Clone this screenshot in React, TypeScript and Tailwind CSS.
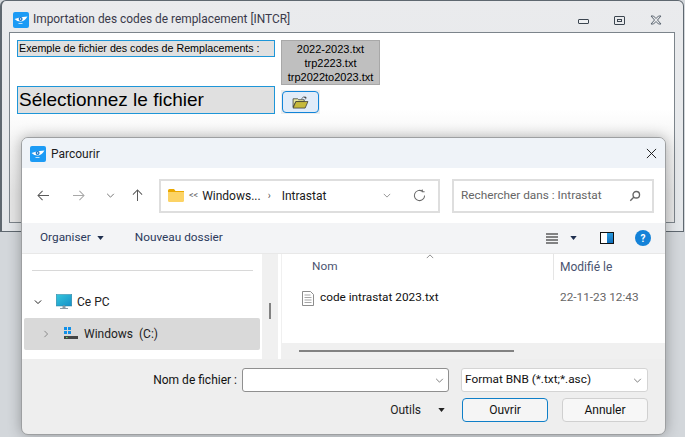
import React from "react";

const Logo = ({ className }: { className?: string }) => (
  <svg viewBox="0 0 16 16" className={className}>
    <rect width="16" height="16" rx="2" fill="#1c9bf5" />
    <path d="M1.500 7 Q7 4.500 14.500 4.500 Q11.500 9.500 7.500 9.500 Q4 9.500 1.500 7Z" fill="#fff" />
    <circle cx="7.600" cy="7" r="2" fill="#1a74c4" />
    <circle cx="7.600" cy="7" r="0.700" fill="#fff" />
    <path d="M5.500 11.500h4" stroke="#bfe2fb" strokeWidth="1" />
  </svg>
);

const Chevron = ({ d, color = "#6b6b6b", className, w = 1.1 }: { d: string; color?: string; className?: string; w?: number }) => (
  <svg viewBox="0 0 16 16" className={className} fill="none" stroke={color} strokeWidth={w}>
    <path d={d} />
  </svg>
);

const Tri = ({ className, color = "#1f2f4f" }: { className?: string; color?: string }) => (
  <svg viewBox="0 0 8 5" className={className}>
    <path d="M0 0h8L4 5z" fill={color} />
  </svg>
);

export default function App() {
  return (
    <div
      className="relative w-[685px] h-[437px] overflow-hidden bg-[#d3d7db] text-black"
      style={{ fontFamily: 'Roboto,"Noto Sans",sans-serif' }}
    >
      {/* Parent window */}
      <div className="w-[684px] h-[232px] flex flex-col bg-gradient-to-b from-[#eaebed] to-[#e4e7ea] border-t border-l-2 border-r border-b border-[#5f6870] rounded-t-[6px]">
        <div className="h-[31px] flex items-center shrink-0 pl-[11px] pr-[21px] pt-[7px]">
          <Logo className="w-[16px] h-[16px]" />
          <span className="ml-[4px] text-[11.9px] text-[#3a3a4a]">
            Importation des codes de remplacement [INTCR]
          </span>
          <div className="ml-auto flex items-center gap-[25px]">
            <div className="w-[11px] h-[5px] mt-[2px] border border-[#3c4650] bg-[#eef0f2] rounded-[1px]" />
            <div className="w-[11px] h-[9px] border border-[#3c4650] flex items-center justify-center rounded-[1px]">
              <div className="w-[5px] h-[3px] border border-[#3c4650]" />
            </div>
            <svg viewBox="0 0 12 10" className="w-[12px] h-[10px]" fill="none" stroke="#5b6570" strokeWidth="1">
              <path d="M1 1h2.500L6 3.500 8.500 1H11L7.500 5 11 9H8.500L6 6.500 3.500 9H1L4.500 5z" />
            </svg>
          </div>
        </div>
        <div className="ml-[7px] mr-[8px] h-[191px] border border-[#7c848b] bg-gradient-to-b from-white from-[40%] to-[#e6e6e6] to-[85%]">
          <div className="pl-[7px] pt-[7px] flex items-start" style={{ fontFamily: '"Liberation Sans",sans-serif' }}>
            <div className="w-[258px] h-[17px] border border-[#1e96d8] bg-[#e0e0e0] text-[10.7px] leading-[15px] pl-[1px] whitespace-nowrap">
              Exemple de fichier des codes de Remplacements :
            </div>
            <div className="ml-[6px] w-[99px] h-[45px] bg-[#bfbfbf] border border-[#a8a8a8] text-[11px] leading-[14px] text-center pt-[1px]">
              <div>2022-2023.txt</div>
              <div>trp2223.txt</div>
              <div>trp2022to2023.txt</div>
            </div>
          </div>
          <div className="pl-[7px] mt-[1px] flex items-start" style={{ fontFamily: '"Liberation Sans",sans-serif' }}>
            <div className="w-[258px] h-[28px] border border-[#1e96d8] bg-[#e0e0e0] text-[19px] leading-[26px] pl-[1px]">
              Sélectionnez le fichier
            </div>
            <div className="ml-[6px] mt-[4px] w-[39px] h-[24px] bg-[#eeeeee] flex items-center justify-center">
              <div className="w-[37px] h-[22px] border border-[#1184d8] rounded-[4px] bg-[#e1ecf9] flex items-center justify-center">
                <svg viewBox="0 0 18 14" className="w-[17px] h-[13px]">
                  <path d="M1 3h5l1 1h6v2H4L1 12z" fill="#e8e8a0" stroke="#333" strokeWidth="0.8" />
                  <path d="M4 6h13l-3 7H1z" fill="#c6b93c" stroke="#333" strokeWidth="0.8" />
                  <path d="M10 3 Q12 0 15 1.500 M15 1.500 l-.5 2 M15 1.500 l-2 -.2" fill="none" stroke="#333" strokeWidth="0.8" />
                </svg>
              </div>
            </div>
          </div>
        </div>
      </div>

      {/* File dialog */}
      <div className="absolute left-[21px] top-[137px] w-[645px] h-[298px] flex flex-col overflow-hidden rounded-[7px] border border-[#9d9fa1] bg-[#eeeeee] text-[11.8px] shadow-[0_0_14px_rgba(0,0,0,0.3)]">
        <div className="h-[30px] shrink-0 bg-[#eff3f8] flex items-center pl-[8px] pr-[8px] pt-[1px]">
          <Logo className="w-[16px] h-[16px]" />
          <span className="ml-[5px] text-[12px] text-[#1c1c1c]">Parcourir</span>
          <svg viewBox="0 0 12 12" className="ml-auto w-[11px] h-[11px]" fill="none" stroke="#111" strokeWidth="1">
            <path d="M1 1l10 10M11 1L1 11" />
          </svg>
        </div>

        <div className="h-[55px] shrink-0 bg-white flex items-center pl-[15px] pr-[11px]">
          <div className="flex items-center gap-[19px] w-[122px] text-[#555]">
            <svg viewBox="0 0 14 12" className="w-[13px] h-[11px]" fill="none" stroke="#5a5a5a" strokeWidth="1.1"><path d="M13 6H1M6 1L1 6l5 5" /></svg>
            <svg viewBox="0 0 14 12" className="ml-[3px] w-[13px] h-[11px]" fill="none" stroke="#a8a8a8" strokeWidth="1.1"><path d="M1 6h12M8 1l5 5-5 5" /></svg>
            <svg viewBox="0 0 10 6" className="ml-[2px] w-[9px] h-[5px]" fill="none" stroke="#6a6a6a" strokeWidth="1.100"><path d="M1 1l4 4 4-4" /></svg>
            <svg viewBox="0 0 12 14" className="ml-[-2px] w-[11px] h-[13px]" fill="none" stroke="#5a5a5a" strokeWidth="1.1"><path d="M6 13V1M1 6l5-5 5 5" /></svg>
          </div>
          <div className="w-[281px] h-[34px] border-2 border-[#dedede] flex items-center pl-[7px] pr-[12px] text-[#1a1a1a]">
            <svg viewBox="0 0 16 13" className="w-[16px] h-[13px]">
              <path d="M0 1.500Q0 0 1.500 0H6l1.500 2H16v2H0z" fill="#eba800" />
              <path d="M0 3h16v8.500Q16 13 14.500 13h-13Q0 13 0 11.500z" fill="#fcd365" />
            </svg>
            <span className="ml-[5px] text-[9px] text-[#666]">&lt;&lt;</span>
            <span className="ml-[4px] text-[12px]">Windows...</span>
            <span className="ml-[7px] text-[10px] text-[#555]">›</span>
            <span className="ml-[11px] text-[12px]">Intrastat</span>
            <svg viewBox="0 0 10 6" className="ml-auto w-[8px] h-[5px]" fill="none" stroke="#808080" strokeWidth="1"><path d="M1 1l4 4 4-4" /></svg>
            <svg viewBox="0 0 14 14" className="ml-[22px] w-[13px] h-[13px]" fill="none" stroke="#6a6a6a" strokeWidth="1.100"><path d="M12.500 7A5.500 5.500 0 1 1 10 2.400M10 .5v2.500h2.500" /></svg>
          </div>
          <div className="ml-[12px] w-[202px] h-[34px] border-2 border-[#dedede] flex items-center pl-[7px] pr-[11px] text-[#666]">
            <span>Rechercher dans : Intrastat</span>
            <svg viewBox="0 0 14 14" className="ml-auto w-[12px] h-[12px]" fill="none" stroke="#666" strokeWidth="1.600"><circle cx="8.500" cy="5.500" r="3.800" /><path d="M5.800 8.200L1.500 12.500" /></svg>
          </div>
        </div>

        <div className="h-[31px] shrink-0 bg-[#f3f4f6] border-b border-[#e8e8e8] flex items-center pl-[18px] pr-[14px] text-[#2c3a5c]">
          <span>Organiser</span>
          <Tri className="ml-[6px] w-[7px] h-[4px]" />
          <span className="ml-[31px]">Nouveau dossier</span>
          <svg viewBox="0 0 12 10" className="ml-auto w-[12px] h-[11px]" stroke="#111" strokeWidth="1"><path d="M0 .5h12M0 3.500h12M0 6.500h12M0 9.500h12" /></svg>
          <Tri className="ml-[12px] w-[7px] h-[4px]" />
          <div className="ml-[23px] w-[14px] h-[12px] border border-[#111] flex justify-end bg-white">
            <div className="w-[6px] h-full bg-gradient-to-b from-[#2a9bdf] to-[#0f6fbd]" />
          </div>
          <div className="ml-[21px] w-[16px] h-[16px] rounded-full bg-[#1482d8] text-white font-bold text-[10px] flex items-center justify-center">?</div>
        </div>

        <div className="h-[105px] shrink-0 bg-white flex">
          <div className="w-[240px] relative">
            <div className="ml-[10px] mr-[9px] mt-[16px] h-px bg-[#d8d8d8]" />
            <div className="flex items-center h-[32px] mt-[15px]">
              <Chevron d="M3 5.500l5 5 5-5" color="#222" w={1.6} className="ml-[11px] w-[10px] h-[10px]" />
              <svg viewBox="0 0 16 16" className="ml-[13px] w-[16px] h-[16px]">
                <defs>
                  <linearGradient id="scr" x1="0" y1="0" x2="1" y2="1">
                    <stop offset="0" stopColor="#35c6dc" />
                    <stop offset="1" stopColor="#1590c8" />
                  </linearGradient>
                </defs>
                <rect x="0.250" y="0.500" width="15.500" height="11.500" fill="url(#scr)" stroke="#2b7f9e" strokeWidth="0.5" />
                <path d="M7 12h2v2H7zM4 14.500h8" stroke="#8a9aa5" fill="#8a9aa5" />
              </svg>
              <span className="ml-[5px] text-[12px] text-[#222]">Ce PC</span>
            </div>
            <div className="mx-[2px] h-[32px] rounded-[2px] bg-[#d9d9d9] flex items-center">
              <Chevron d="M5.500 3l5 5-5 5" color="#8a8a8a" w={1.6} className="ml-[17px] w-[10px] h-[10px]" />
              <svg viewBox="0 0 16 14" className="ml-[12px] -mt-[3px] w-[16px] h-[14px]">
                <path d="M1 1h3v3H1zM5 1h3v3H5zM1 5h3v3H1zM5 5h3v3H5z" fill="#0f8fe8" />
                <path d="M1 10h14v3H1z" fill="#444" />
                <path d="M10 7l5 3H1l8-1z" fill="#d8d8d8" />
                <rect x="3" y="11" width="1.500" height="1" fill="#5fdc5f" />
              </svg>
              <span className="ml-[5px] text-[12px] text-[#222] whitespace-pre">Windows  (C:)</span>
            </div>
          </div>
          <div className="w-[16px] bg-[#f0f0f0] flex flex-col items-center pt-[49px]">
            <div className="w-[2px] h-[16px] bg-[#828282]" />
          </div>
          <div className="w-[3px]" />
          <div className="flex-1 flex flex-col border-l border-[#f0f0f0] relative">
            <div className="flex h-[26px] text-[#4a5470]">
              <div className="w-[271px] pl-[30px] relative pt-[4px]">
                Nom
                <svg viewBox="0 0 10 6" className="absolute left-[144px] top-[0px] w-[8px] h-[5px]" fill="none" stroke="#777" strokeWidth="1"><path d="M1 5l4-4 4 4" /></svg>
              </div>
              <div className="border-l border-[#e5e5e5] pl-[6px] pt-[4px] text-[12px]">Modifié le</div>
            </div>
            <div className="flex items-center h-[30px] mt-[3px]">
              <svg viewBox="0 0 12 15" className="ml-[20px] w-[12px] h-[15px]" fill="#fff" stroke="#808080" strokeWidth="0.9">
                <path d="M.5.500h8l3 3v11H.5z" />
                <path d="M2.500 4h6M2.500 6.500h7M2.500 9h7M2.500 11.500h7" strokeWidth="0.7" />
              </svg>
              <span className="ml-[6px] w-[240px] text-[#111]">code intrastat 2023.txt</span>
              <span className="text-[#666]">22-11-23 12:43</span>
            </div>
            <div className="mt-auto h-[16px] bg-[#f0f0f0] pl-[17px] pt-[7px]">
              <div className="w-[215px] h-[2px] bg-[#828282]" />
            </div>
          </div>
        </div>

        <div className="flex-1 flex flex-col pt-[9px] pr-[17px]">
          <div className="flex items-center justify-end h-[24px]">
            <span className="text-[12px] text-[#111]">Nom de fichier :</span>
            <div className="ml-[5px] w-[207px] h-[24px] bg-white border border-[#8f8f8f] rounded-[3px] flex items-center justify-end pr-[4px]">
              <svg viewBox="0 0 10 6" className="w-[9px] h-[5px]" fill="none" stroke="#666" strokeWidth="1"><path d="M1 1l4 4 4-4" /></svg>
            </div>
            <div className="ml-[12px] w-[187px] h-[24px] bg-white border border-[#d4d4d4] rounded-[3px] flex items-center pl-[3px] pr-[5px] text-[#111]">
              <span>Format BNB (*.txt;*.asc)</span>
              <svg viewBox="0 0 10 6" className="ml-auto w-[9px] h-[5px]" fill="none" stroke="#666" strokeWidth="1"><path d="M1 1l4 4 4-4" /></svg>
            </div>
          </div>
          <div className="mt-[6px] flex items-center justify-end text-[12px]">
            <span className="text-[#222]">Outils</span>
            <Tri className="ml-[17px] w-[7px] h-[4px]" color="#222" />
            <div className="ml-[17px] w-[86px] h-[24px] border border-[#0f7fc8] rounded-[4px] bg-[#f5f5f5] flex items-center justify-center text-[#111]">Ouvrir</div>
            <div className="ml-[14px] w-[86px] h-[24px] border border-[#d0d0d0] rounded-[4px] bg-[#f7f7f7] flex items-center justify-center text-[#111]">Annuler</div>
          </div>
        </div>
      </div>
    </div>
  );
}
